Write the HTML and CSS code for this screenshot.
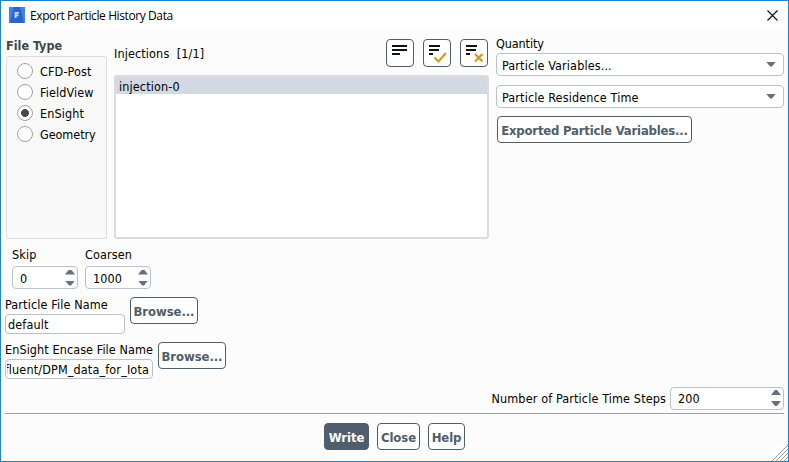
FILE: index.html
```html
<!DOCTYPE html>
<html lang="en">
<head>
<meta charset="utf-8">
<title>Export Particle History Data</title>
<link rel="stylesheet" href="styles.css">
</head>
<body>
<div class="window">
  <header class="titlebar">
    <svg class="logo" width="16" height="16" viewBox="0 0 16 16"><path fill="#3f83e8" d="M0 0h16v16H0z"/><path fill="#2a62d0" d="M5 0h6l4 16H1z"/><path fill="none" stroke="#c9dcfb" stroke-width="1.800" d="M6.500 11V5.800H10M6.500 8.300H9.500"/></svg>
    <h1>Export Particle History Data</h1>
    <svg class="close" width="11" height="11" viewBox="0 0 11 11"><path fill="none" stroke="#111" stroke-width="1.150" d="M.5.5l10 10M10.500.5l-10 10"/></svg>
  </header>

  <main class="top">
    <section class="filetype">
      <h2>File Type</h2>
      <div class="radios">
        <label><i class="radio"></i><span>CFD-Post</span></label>
        <label><i class="radio"></i><span>FieldView</span></label>
        <label><i class="radio on"></i><span>EnSight</span></label>
        <label><i class="radio"></i><span class="tight">Geometry</span></label>
      </div>
    </section>

    <section class="injections">
      <div class="inj-head">
        <span class="inj-label">Injections&nbsp; [1/1]</span>
        <button class="tool"><svg width="26" height="26" viewBox="0 0 26 26"><path stroke="#111" stroke-width="2" d="M5 6h15M5 10h15M5 14h8"/></svg></button>
        <button class="tool"><svg width="26" height="26" viewBox="0 0 26 26"><path stroke="#111" stroke-width="2" d="M5 6h11M5 10h10M5 14h4"/><path fill="none" stroke="#d09a1c" stroke-width="2" d="M10.500 17.500l4 4L22 13"/></svg></button>
        <button class="tool"><svg width="26" height="26" viewBox="0 0 26 26"><path stroke="#111" stroke-width="2" d="M5 6h11M5 10h10M5 14h4"/><path fill="none" stroke="#d09a1c" stroke-width="2.200" d="M14 14l7.500 7.500M21.500 14L14 21.500"/></svg></button>
      </div>
      <div class="list"><div class="item">injection-0</div></div>
    </section>

    <section class="quantity">
      <div class="q-label">Quantity</div>
      <div class="select"><span>Particle Variables...</span><i class="arrow down big"></i></div>
      <div class="select"><span>Particle Residence Time</span><i class="arrow down big"></i></div>
      <button class="btn exported">Exported Particle Variables...</button>
    </section>
  </main>

  <section class="spins">
    <div class="field"><span>Skip</span>
      <div class="spin"><b>0</b><span class="arrows"><i class="arrow up"></i><i class="arrow down"></i></span></div></div>
    <div class="field"><span>Coarsen</span>
      <div class="spin"><b>1000</b><span class="arrows"><i class="arrow up"></i><i class="arrow down"></i></span></div></div>
  </section>

  <section class="file">
    <div class="filebox short"><span>Particle File Name</span><div class="input"><span>default</span></div></div>
    <button class="btn browse">Browse...</button>
  </section>
  <section class="file">
    <div class="filebox long"><span class="encase">EnSight Encase File Name</span><div class="input end"><div class="clip"><span class="path">fluent/DPM_data_for_Iota</span></div></div></div>
    <button class="btn browse">Browse...</button>
  </section>

  <section class="steps">
    <span>Number of Particle Time Steps</span>
    <div class="spin wide"><b>200</b><span class="arrows"><i class="arrow up"></i><i class="arrow down"></i></span></div>
  </section>

  <footer class="actions">
    <button class="btn primary">Write</button>
    <button class="btn closebtn">Close</button>
    <button class="btn help">Help</button>
  </footer>
  <svg class="grip" width="16" height="16" viewBox="0 0 16 16"><path fill="#fff" d="M0 0h16v16H0z"/><path stroke="#999" stroke-width="1" d="M0 16L16 0M4 16L16 4M8 16L16 8M12 16l4-4"/></svg>
</div>
</body>
</html>
```
FILE: styles.css
```css
* { box-sizing: border-box; }
body {
  margin: 0;
  font: 12.5px/16px "DejaVu Sans Condensed", "DejaVu Sans", sans-serif;
  font-stretch: condensed;
  letter-spacing: 0.13px;
  color: #000;
}
h1, h2 { margin: 0; font-size: inherit; font-weight: normal; }
span, .item, .q-label, .btn { white-space: nowrap; }
.window {
  position: relative;
  width: 789px;
  height: 462px;
  overflow: hidden;
  border: 1px solid #1883d7;
  background: #fcfcfc;
}
.titlebar {
  display: flex;
  align-items: center;
  height: 29px;
  padding: 0 10px 0 8px;
  background: #fff;
}
.logo { margin-bottom: 1px; }
.titlebar h1 {
  flex: 1;
  margin-left: 5px;
  font: 12px/16px "Open Sans", "Noto Sans", sans-serif;
  letter-spacing: -0.4px;
}
.top { display: flex; height: 209px; padding: 0 4px; }

.filetype { width: 102px; margin-left: 1px; padding-top: 8px; }
.filetype h2 { height: 18px; font-weight: bold; color: #3c4650; line-height: 16px; letter-spacing: 0; }
.radios {
  width: 101px;
  height: 183px;
  padding: 3px 0 0 10px;
  border: 1px solid #dedede;
  border-radius: 2px;
  background: #f9f9f9;
}
.radios label { display: flex; align-items: center; gap: 7px; height: 21px; }
.radios span { padding-top: 2px; }
.tight { letter-spacing: -0.05px; }
.radio {
  width: 16px;
  height: 16px;
  border: 1px solid #a2a2a2;
  border-radius: 50%;
  background: #fff;
}
.radio.on { background: radial-gradient(circle, #45484c 3.500px, #fff 4.300px); }

.injections { width: 375px; margin-left: 6px; padding-top: 9px; }
.inj-head { display: flex; height: 36px; gap: 9px; padding-right: 1px; }
.inj-label { flex: 1; padding-top: 7px; }
.tool {
  width: 28px;
  height: 28px;
  padding: 0;
  border: 1px solid #505d6c;
  border-radius: 4px;
  background: #fff;
}
.tool svg { display: block; }
.list {
  height: 164px;
  border: 2px solid #dcdcdc;
  border-radius: 3px;
  background: #fff;
}
.item { height: 17px; padding-left: 3px; background: #d2d9e3; line-height: 19px; }

.quantity { width: 288px; margin-left: 7px; padding-top: 6px; }
.q-label { height: 17px; line-height: 16px; letter-spacing: -0.1px; }
.select {
  display: flex;
  align-items: center;
  justify-content: space-between;
  height: 23px;
  margin-bottom: 9px;
  padding: 2px 7px 0 5px;
  border: 1px solid #b9c2cf;
  border-radius: 4px;
  background: #fff;
}
.arrow { display: block; width: 10px; height: 5px; background: #66717d; }
.arrow.down { clip-path: polygon(0 0, 100% 0, 60% 100%, 40% 100%); }
.arrow.up { clip-path: polygon(0 100%, 100% 100%, 60% 0, 40% 0); }
.arrow.big { margin-top: -3px; }

.btn {
  display: flex;
  align-items: center;
  justify-content: center;
  height: 27px;
  padding: 2px 0 0;
  border: 1px solid #505d6c;
  border-radius: 4px;
  background: #fff;
  color: #505d6c;
  font: bold 13px/16px "DejaVu Sans Condensed", "DejaVu Sans", sans-serif;
  font-stretch: condensed;
  letter-spacing: -0.1px;
}
.exported { width: 195px; margin: -1px 0 0 1px; letter-spacing: -0.2px; }

.spins { display: flex; gap: 7px; height: 58px; padding: 8px 0 0 11px; }
.field { width: 66px; }
.field > span { display: block; height: 19px; }
.spin {
  display: flex;
  align-items: center;
  justify-content: space-between;
  height: 23px;
  padding: 2px 2px 0 7px;
  border: 1px solid #b9c2cf;
  border-radius: 4px;
  background: #fff;
}
.spin b { font-weight: normal; }
.arrows { display: flex; flex-direction: column; gap: 6px; padding: 0 0 2px; }

.file { display: flex; align-items: flex-start; height: 45px; padding-left: 4px; gap: 5px; }
.filebox > span { display: block; height: 17px; }
.encase { letter-spacing: 0.09px; }
.short { width: 120px; }
.long { width: 148px; }
.input {
  display: flex;
  height: 20px;
  padding: 2px 2px 0;
  border: 1px solid #b9c2cf;
  border-radius: 4px;
  background: #fff;
}
.input.end { padding: 2px 3px 0 1px; }
.clip { display: flex; flex: 1; min-width: 0; justify-content: flex-end; overflow: hidden; }
.path { letter-spacing: 0.15px; }
.browse { width: 68px; }

.steps {
  display: flex;
  align-items: center;
  justify-content: flex-end;
  gap: 4px;
  height: 23px;
  margin-right: 4px;
}
.wide { width: 114px; padding-top: 1px; }
.actions {
  display: flex;
  gap: 8px;
  height: 44px;
  margin: 3px 4px 0;
  padding: 9px 0 0 319px;
  border-top: 1px solid #a0a0a0;
}
.primary { width: 45px; background: #505d6c; color: #fff; }
.closebtn { width: 43px; }
.help { width: 37px; }
.grip { position: absolute; right: 0; bottom: 0; }
```
